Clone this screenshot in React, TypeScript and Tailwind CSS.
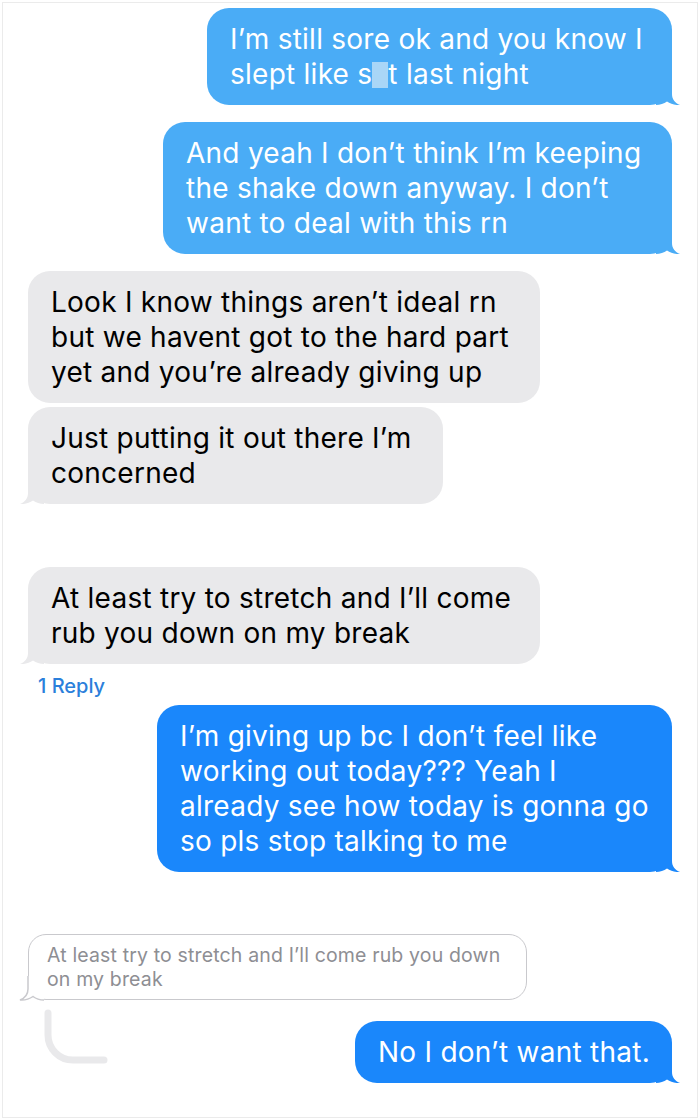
import React from 'react'

type Side = 'left' | 'right'

// iMessage style tail, drawn for the right side and mirrored for the left
function Tail({ side, fill }: { side: Side; fill: string }) {
  return (
    <svg
      viewBox="0 0 24 24"
      className={
        side === 'right'
          ? `absolute bottom-0 -right-[8px] h-6 w-6 ${fill}`
          : `absolute bottom-0 -left-[8px] h-6 w-6 -scale-x-100 ${fill}`
      }
    >
      <path d="M16 0V13C16 18.5 19 22 24 24C19 24.4 14.5 23 11 20.5C8 22.8 4 24 0 24V0Z" />
    </svg>
  )
}

function Bubble({
  side,
  tone,
  width,
  tail = true,
  children,
}: {
  side: Side
  tone: 'sky' | 'blue' | 'gray'
  width: string
  tail?: boolean
  children: React.ReactNode
}) {
  const bg = tone === 'sky' ? 'bg-[#4aacf6]' : tone === 'blue' ? 'bg-[#1a87fb]' : 'bg-[#e9e9eb]'
  const fill = tone === 'sky' ? 'fill-[#4aacf6]' : tone === 'blue' ? 'fill-[#1a87fb]' : 'fill-[#e9e9eb]'
  const text = tone === 'gray' ? 'text-black' : 'text-white'
  return (
    <div className={`flex ${side === 'right' ? 'justify-end' : 'justify-start'}`}>
      <div className={`relative ${width} ${bg} ${text} rounded-[22px] px-[23px] py-[13.5px] text-[28px] leading-[35px] tracking-[0.25px]`}>
        {children}
        {tail && <Tail side={side} fill={fill} />}
      </div>
    </div>
  )
}

function Line({ children }: { children: React.ReactNode }) {
  return <div className="whitespace-nowrap">{children}</div>
}

export default function App() {
  return (
    <div className="h-[1120px] w-[700px] bg-white p-[2px] font-['Inter','Noto_Sans',sans-serif]">
      <div className="flex h-full flex-col border border-[#ebebeb] pl-[25px] pr-[25px] pt-[5px]">
        <Bubble side="right" tone="sky" width="w-[465px]">
          <Line>I’m still sore ok and you know I</Line>
          <Line>
            slept like s
            <span className="inline-block h-[26px] w-[16px] translate-y-[4px] bg-[#a9d6f7]" />
            t last night
          </Line>
        </Bubble>

        <div className="mt-[17px]">
          <Bubble side="right" tone="sky" width="w-[509px]">
            <Line>And yeah I don’t think I’m keeping</Line>
            <Line>the shake down anyway. I don’t</Line>
            <Line>want to deal with this rn</Line>
          </Bubble>
        </div>

        <div className="mt-[17px]">
          <Bubble side="left" tone="gray" width="w-[512px]" tail={false}>
            <Line>Look I know things aren’t ideal rn</Line>
            <Line>but we havent got to the hard part</Line>
            <Line>yet and you’re already giving up</Line>
          </Bubble>
        </div>

        <div className="mt-[4px]">
          <Bubble side="left" tone="gray" width="w-[415px]">
            <Line>Just putting it out there I’m</Line>
            <Line>concerned</Line>
          </Bubble>
        </div>

        <div className="mt-[63px]">
          <Bubble side="left" tone="gray" width="w-[512px]">
            <Line>At least try to stretch and I’ll come</Line>
            <Line>rub you down on my break</Line>
          </Bubble>
        </div>

        <div className="ml-[10px] mt-[10px] text-[20px] font-medium leading-[24px] text-[#2b7fdb]">1 Reply</div>

        <div className="mt-[7px]">
          <Bubble side="right" tone="blue" width="w-[515px]">
            <Line>I’m giving up bc I don’t feel like</Line>
            <Line>working out today??? Yeah I</Line>
            <Line>already see how today is gonna go</Line>
            <Line>so pls stop talking to me</Line>
          </Bubble>
        </div>

        {/* quoted message the reply points back to */}
        <div className="mt-[62px] flex">
          <div className="relative w-[499px] rounded-[18px] border-[1.5px] border-[#c9c9cd] bg-white px-[18px] py-[8px] text-[19.5px] leading-[24px] tracking-[0.15px] text-[#8e8e93]">
            <Line>At least try to stretch and I’ll come rub you down</Line>
            <Line>on my break</Line>
            <svg viewBox="0 0 24 24" className="absolute -bottom-[0.75px] -left-[8.75px] h-6 w-6 -scale-x-100 overflow-visible">
              <path d="M16 0V13C16 18.5 19 22 24 24C19 24.4 14.5 23 11 20.5C8 22.8 4 24 0 24V0Z" fill="#ffffff" />
              <path
                d="M16 0V13C16 18.5 19 22 24 24C19 24.4 14.5 23 11 20.5C8 22.8 4 24 0 24"
                fill="none"
                stroke="#c9c9cd"
                strokeWidth="1.5"
              />
            </svg>
          </div>
        </div>

        <div className="flex items-start justify-between">
          <svg width="80" height="60" viewBox="0 0 80 60" className="ml-[13px] mt-[8px]">
            <path d="M7 5V27A25 25 0 0 0 32 52H63" fill="none" stroke="#e9e9eb" strokeWidth="7" strokeLinecap="round" />
          </svg>
          <div className="mt-[21px]">
            <Bubble side="right" tone="blue" width="w-[317px]">
              <Line>No I don’t want that.</Line>
            </Bubble>
          </div>
        </div>
      </div>
    </div>
  )
}
